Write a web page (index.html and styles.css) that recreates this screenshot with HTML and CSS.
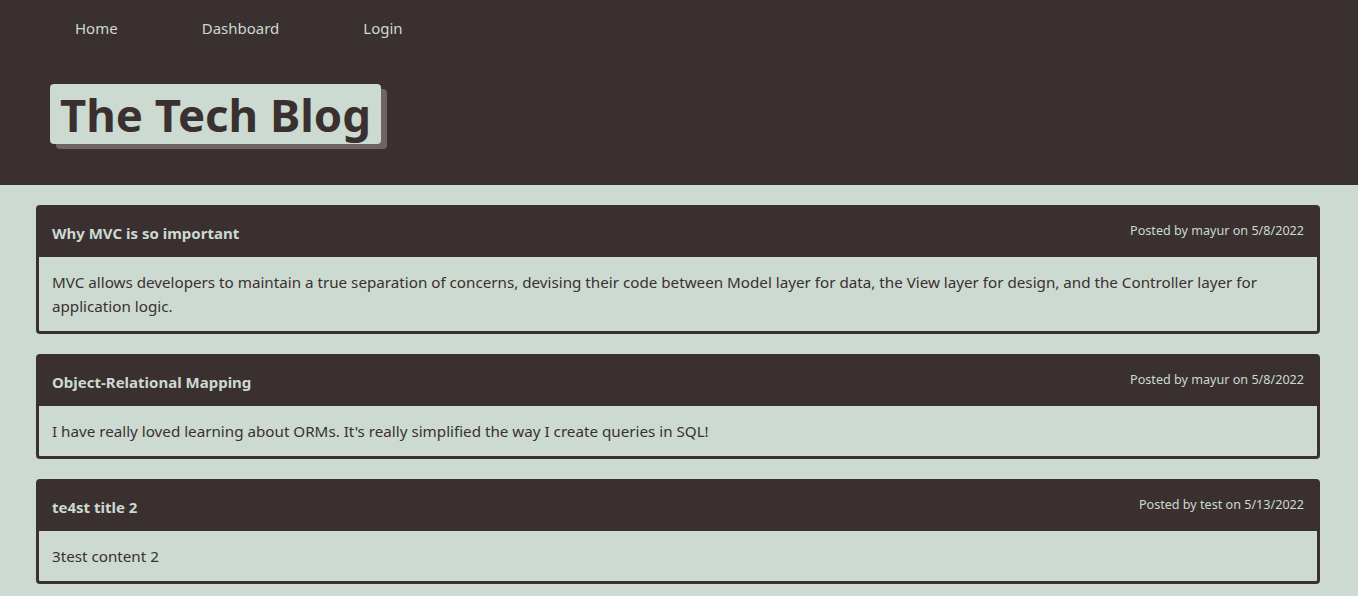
FILE: index.html
```html
<!DOCTYPE html>
<html lang="en">
<head>
    <meta charset="UTF-8">
    <meta name="viewport" content="width=device-width, initial-scale=1.0">
    <title>The Tech Blog</title>
    <link rel="stylesheet" href="styles.css">
</head>
<body>
    <header class="site-header">
        <nav class="nav">
            <a href="#">Home</a>
            <a href="#">Dashboard</a>
            <a href="#">Login</a>
        </nav>
        <h1 class="brand">The Tech Blog</h1>
    </header>

    <main class="posts">
        <article class="post">
            <div class="post-head">
                <h2>Why MVC is so important</h2>
                <span class="meta">Posted by mayur on 5/8/2022</span>
            </div>
            <div class="post-body">
                MVC allows developers to maintain a true separation of concerns, devising their code between Model layer for data, the View layer for design, and the Controller layer for application logic.
            </div>
        </article>

        <article class="post">
            <div class="post-head">
                <h2>Object-Relational Mapping</h2>
                <span class="meta">Posted by mayur on 5/8/2022</span>
            </div>
            <div class="post-body">
                I have really loved learning about ORMs. It's really simplified the way I create queries in SQL!
            </div>
        </article>

        <article class="post">
            <div class="post-head">
                <h2>te4st title 2</h2>
                <span class="meta">Posted by test on 5/13/2022</span>
            </div>
            <div class="post-body">
                3test content 2
            </div>
        </article>
    </main>
</body>
</html>
```

FILE: styles.css
```css
body {
    font-family: "Noto Sans", sans-serif;
    background-color: #ccdad1;
    color: #3a3030;
    margin: 0;
    padding: 0;
}
.site-header {
    background-color: #3a3030;
    height: 185px;
    padding: 0 0 0 50px;
    box-sizing: border-box;
    overflow: hidden;
}
.nav {
    display: flex;
    padding-top: 18px;
}
.nav a {
    color: #ccdad1;
    text-decoration: none;
    font-size: 15px;
    padding: 0 25px;
    margin-right: 34px;
}
.brand {
    display: inline-block;
    margin: 46px 0 0 0;
    background-color: #ccdad1;
    color: #3a3030;
    font-size: 45.5px;
    line-height: 60px;
    padding: 0 10px;
    border-radius: 4px;
    box-shadow: 6px 5px 0 #6f6464;
}
.posts {
    padding: 20px 38px 20px 36px;
}
.post {
    border: 3px solid #3a3030;
    border-radius: 4px;
    margin-bottom: 20px;
}
.post-head {
    background-color: #3a3030;
    color: #ccdad1;
    display: flex;
    justify-content: space-between;
    align-items: center;
    height: 49px;
    padding: 0 13px;
}
.post-head h2 {
    margin: 0;
    font-size: 15px;
}
.meta {
    font-size: 12.6px;
    margin-bottom: 4px;
}
.post-body {
    padding: 13px;
    font-size: 15.2px;
    line-height: 24px;
}
```
